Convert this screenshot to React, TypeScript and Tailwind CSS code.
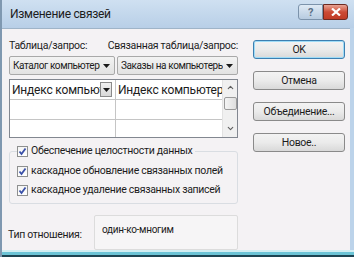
import { ChevronDown, ChevronUp } from "lucide-react";

function Arrow() {
  return (
    <svg width="7" height="4" viewBox="0 0 7 4" className="shrink-0">
      <path d="M0 0h7L3.5 4z" fill="#1a1a1a" />
    </svg>
  );
}

function Check() {
  return (
    <span className="w-[11px] h-[11px] shrink-0 border border-[#8e8f8f] bg-gradient-to-b from-[#f4f4f4] to-white flex items-center justify-center">
      <svg width="9" height="9" viewBox="0 0 9 9">
        <path d="M1.5 4.5 3.5 7 7.5 1.5" fill="none" stroke="#3a50a8" strokeWidth="1.8" />
      </svg>
    </span>
  );
}

function Combo({ text, w }: { text: string; w: string }) {
  return (
    <div className={`${w} h-[19px] border border-[#a9a9a9] rounded-[2px] bg-gradient-to-b from-[#f3f3f3] to-[#e2e2e2] flex items-center pl-[3px] pr-[4px] gap-[3px]`}>
      <span className="flex-1 overflow-hidden whitespace-nowrap text-[10px] tracking-[-0.4px] leading-none">{text}</span>
      <Arrow />
    </div>
  );
}

function Btn({ label, primary }: { label: string; primary?: boolean }) {
  return (
    <div
      className={`h-[19px] rounded-[3px] flex items-center justify-center whitespace-nowrap bg-gradient-to-b from-[#f3f3f3] via-[#ebebeb] to-[#d9d9d9] ${
        primary ? "border border-[#3c7fb1] shadow-[inset_0_0_0_1px_#9fdcf7]" : "border border-[#8a8a8a]"
      }`}
    >
      {label}
    </div>
  );
}

export default function App() {
  return (
    <div className="w-[354px] h-[257px] bg-[#bcd3ea] font-['Roboto',sans-serif] text-[10.5px] tracking-[-0.3px] text-[#1c1c1c] flex flex-col border-l-[2px] border-[#7f98b0] overflow-hidden">
      {/* title bar */}
      <div className="h-[28px] shrink-0 flex items-center pl-[8px] pr-[6px] bg-gradient-to-b from-[#cfe0f1] to-[#b8cfe7]">
        <span className="text-[12px] flex-1">Изменение связей</span>
        <div className="flex -mt-[4px]">
          <div className="w-[25px] h-[16px] rounded-l-[3px] border border-[#7c93ab] bg-gradient-to-b from-[#dfeaf5] to-[#b7cbe0] flex items-center justify-center text-[11px] leading-none text-[#5a6f86] font-bold">
            ?
          </div>
          <div className="w-[25px] h-[16px] rounded-r-[3px] border border-[#6d2a22] bg-gradient-to-b from-[#e7a395] via-[#cc4a35] to-[#c03b25] flex items-center justify-center">
            <svg width="10" height="8" viewBox="0 0 10 8">
              <path d="M1 0.5 9 7.5M9 0.5 1 7.5" stroke="#fff" strokeWidth="2.2" />
            </svg>
          </div>
        </div>
      </div>

      {/* body */}
      <div className="flex-1 min-h-0 flex bg-[#f4f2f4] border-t border-[#9fb4c8] mr-[4px]">
        <div className="w-[229px] ml-[7px] flex flex-col">
          <div className="mt-[9px] h-[15px] flex leading-[15px] whitespace-nowrap">
            <span className="w-[108px]">Таблица/запрос:</span>
            <span>Связанная таблица/запрос:</span>
          </div>
          <div className="mt-[3px] flex gap-[2px]">
            <Combo w="w-[106px]" text="Каталог компьютерс" />
            <Combo w="w-[121px]" text="Заказы на компьютеры" />
          </div>

          {/* grid */}
          <div className="mt-[4px] h-[59px] shrink-0 border border-[#828790] bg-white flex">
            <div className="flex-1 min-w-0 flex flex-col">
              <div className="h-[20px] flex border-b border-[#c5c5c5]">
                <div className="w-[106px] flex items-center pl-[2px] pr-[3px] border-r border-[#c5c5c5]">
                  <span className="flex-1 overflow-hidden whitespace-nowrap text-[12px] tracking-[-0.2px] leading-none">Индекс компьютер</span>
                  <span className="w-[12px] h-[15px] shrink-0 border border-[#8a8a8a] bg-gradient-to-b from-[#f0f0f0] to-[#d8d8d8] flex items-center justify-center">
                    <Arrow />
                  </span>
                </div>
                <div className="flex-1 min-w-0 flex items-center pl-[2px] overflow-hidden whitespace-nowrap text-[12px] tracking-[-0.2px] leading-none">
                  Индекс компьютер
                </div>
              </div>
              <div className="h-[20px] flex border-b border-[#c5c5c5]">
                <div className="w-[106px] border-r border-[#c5c5c5]" />
              </div>
              <div className="flex-1 flex">
                <div className="w-[106px] border-r border-[#c5c5c5]" />
              </div>
            </div>
            <div className="w-[15px] shrink-0 bg-[#f0f0f0] border-l border-[#e2e2e2] flex flex-col items-center">
              <ChevronUp size={9} strokeWidth={3} className="mt-[3px] text-[#606060]" />
              <div className="mt-[5px] w-[13px] h-[13px] border border-[#9a9a9a] rounded-[2px] bg-gradient-to-r from-[#f4f4f4] to-[#dedede]" />
              <ChevronDown size={9} strokeWidth={3} className="mt-auto mb-[4px] text-[#606060]" />
            </div>
          </div>

          {/* group box */}
          <fieldset className="mt-[8px] border border-[#d9dde2] rounded-[3px] pl-[7px] pb-[7px] leading-none whitespace-nowrap">
            <legend className="flex items-center gap-[3px] pr-[3px]">
              <Check />
              <span>Обеспечение целостности данных</span>
            </legend>
            <div className="flex items-center gap-[3px] mt-[9px]">
              <Check />
              <span>каскадное обновление связанных полей</span>
            </div>
            <div className="flex items-center gap-[3px] mt-[8px]">
              <Check />
              <span>каскадное удаление связанных записей</span>
            </div>
          </fieldset>

          <div className="mt-[11px] flex items-center whitespace-nowrap">
            <span className="w-[86px] mt-[4px] -ml-[1px]">Тип отношения:</span>
            <div className="flex-1 h-[35px] border border-[#dcdcdc] rounded-[2px] bg-[#f6f5f6] pl-[7px] pt-[9px] text-[10px] leading-none">
              один-ко-многим
            </div>
          </div>
        </div>

        <div className="w-[92px] ml-[15px] mt-[11px] flex flex-col gap-[12px]">
          <Btn label="OK" primary />
          <Btn label="Отмена" />
          <Btn label="Объединение..." />
          <Btn label="Новое.." />
        </div>
      </div>

      {/* bottom frame */}
      <div className="h-[7px] shrink-0 flex flex-col">
        <div className="h-[2px] bg-[#d3eef2]" />
        <div className="h-[3px] bg-[#6cc4d6]" />
        <div className="h-[2px] bg-[#1d4452]" />
      </div>
    </div>
  );
}
